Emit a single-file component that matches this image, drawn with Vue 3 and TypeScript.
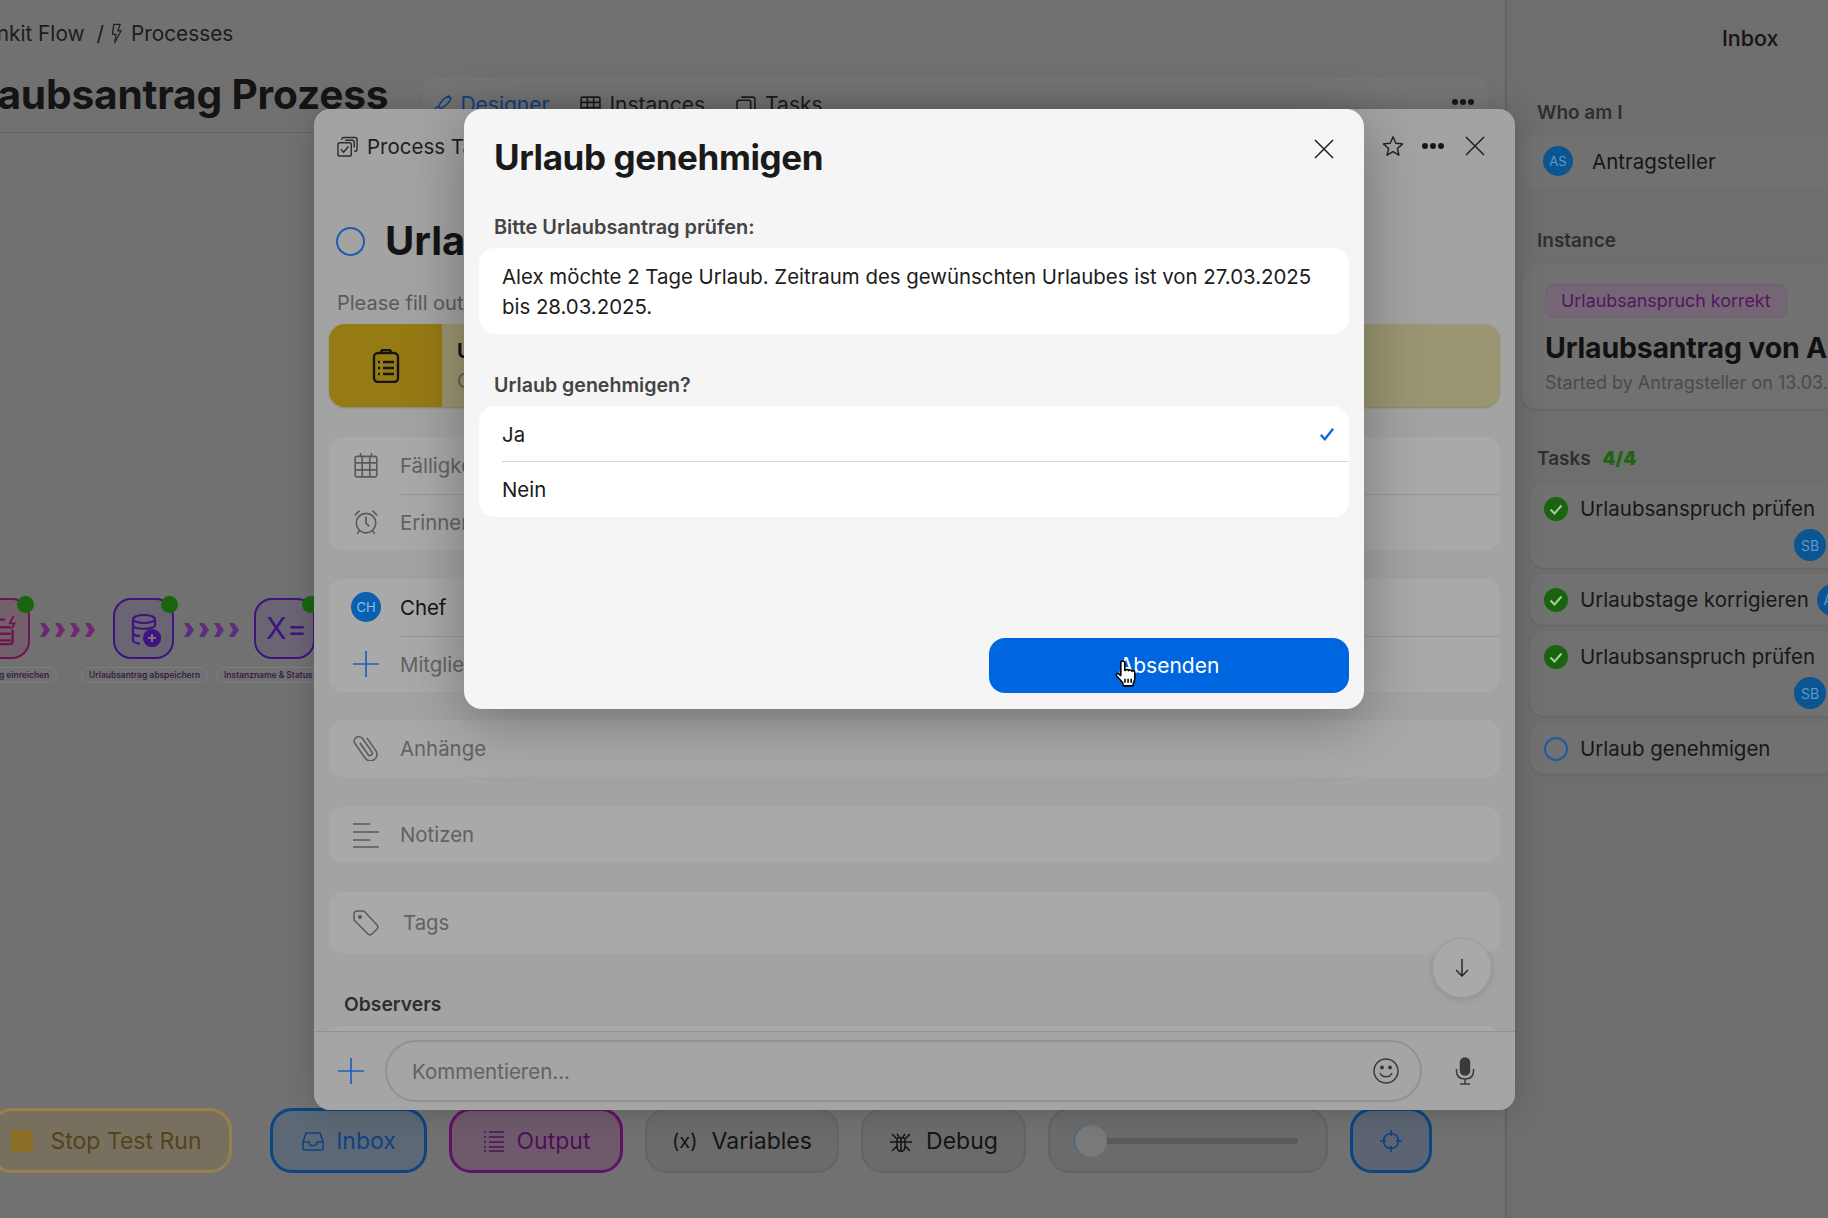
<script setup lang="ts">
interface ToolButton {
  label: string;
  kind: string;
}

interface TaskItem {
  name: string;
  done: boolean;
  owner?: string;
  ownerInline?: boolean;
}

const toolButtons: ToolButton[] = [
  { label: "Stop Test Run", kind: "stop" },
  { label: "Inbox", kind: "inbox" },
  { label: "Output", kind: "output" },
  { label: "Variables", kind: "variables" },
  { label: "Debug", kind: "debug" },
];

const tasks: TaskItem[] = [
  { name: "Urlaubsanspruch prüfen", done: true, owner: "SB" },
  { name: "Urlaubstage korrigieren", done: true, owner: "AS", ownerInline: true },
  { name: "Urlaubsanspruch prüfen", done: true, owner: "SB" },
  { name: "Urlaub genehmigen", done: false },
];

const nodes = [
  { cls: "node-red", left: -31 },
  { cls: "node-purple", left: 113 },
  { cls: "node-purple", left: 254 },
];
const chevrons = [40, 184];
const nodeLabels = [
  { text: "Urlaubsantrag einreichen", left: -62 },
  { text: "Urlaubsantrag abspeichern", left: 81 },
  { text: "Instanzname & Status", left: 216 },
];
</script>

<template>
  <div class="screen">
    <main class="main">
      <div class="crumbs">
        <span>Blinkit Flow</span>
        <span class="slash">/</span>
        <svg class="bolt" viewBox="0 0 12 22" fill="none" stroke="#222" stroke-width="1.4" stroke-linejoin="round">
          <path d="M3 1h7L7.5 8H11L4 21l1.5-9H1.5z" />
        </svg>
        <span>Processes</span>
      </div>
      <div class="title-row">
        <h1>Urlaubsantrag Prozess</h1>
        <div class="tabs">
          <span class="tab tab-active">
            <svg viewBox="0 0 20 20" fill="none" stroke="currentColor" stroke-width="1.5"><path d="M17 2c-5 2-8 6-10 10l2 2c4-2 8-5 10-10zM7 12c-3 0-3 3-5 5 3 1 7 0 7-3" /></svg>
            Designer
          </span>
          <span class="tab">
            <svg viewBox="0 0 20 20" fill="none" stroke="currentColor" stroke-width="1.5"><rect x="1" y="3" width="18" height="14" rx="1.5" /><path d="M1 8h18M1 13h18M7 3v14M13 3v14" /></svg>
            Instances
          </span>
          <span class="tab">
            <svg viewBox="0 0 20 20" fill="none" stroke="currentColor" stroke-width="1.5"><rect x="1" y="6" width="13" height="13" rx="2" /><path d="M5 3h11a2 2 0 0 1 2 2v10" /></svg>
            Tasks
          </span>
          <span class="tab-dots"><i></i><i></i><i></i></span>
        </div>
      </div>

      <div class="canvas">
        <div
          v-for="n in nodes"
          :key="n.left"
          class="node"
          :class="n.cls"
          :style="{ left: n.left + 'px' }"
        >
          <span class="node-dot"></span>
        </div>
        <svg class="node-icon node-icon-form" viewBox="0 0 34 34" fill="none" stroke="#6e1450" stroke-width="2.6">
          <path d="M2 6h14M2 14h20M2 21h20M2 28h20M24 17v12a3 3 0 0 1-3 3H2" />
          <path d="M25 2l-4 8h5l-3 6" stroke-width="2" />
        </svg>
        <svg class="node-icon node-icon-db" viewBox="0 0 32 34" fill="none" stroke="#3e1480" stroke-width="2.2">
          <ellipse cx="15" cy="6" rx="11" ry="4" />
          <path d="M4 6v22c0 1 3 2 7 3M26 6v8M4 13c2 3 14 4 21 1M4 21c1 1 4 2 7 2" />
          <circle cx="23" cy="25" r="8" fill="#3e1480" />
          <path d="M23 21v8M19 25h8" stroke="#7d6e88" />
        </svg>
        <span class="node-eq">X=</span>
        <div v-for="c in chevrons" :key="c" class="chevrons" :style="{ left: c + 'px' }">
          <svg v-for="i in 4" :key="i" viewBox="0 0 10 14" :fill="c === 40 ? '#6d2a72' : '#5f2c80'">
            <path d="M0 0h5l5 7-5 7H0l4-7z" />
          </svg>
        </div>
        <span
          v-for="l in nodeLabels"
          :key="l.text"
          class="node-label"
          :style="{ left: l.left + 'px' }"
        >{{ l.text }}</span>

        <div class="toolbar">
          <button v-for="b in toolButtons" :key="b.kind" class="tool" :class="'tool-' + b.kind">
            <span v-if="b.kind === 'stop'" class="stop-square"></span>
            <svg v-else-if="b.kind === 'inbox'" viewBox="0 0 24 24" fill="none" stroke="currentColor" stroke-width="1.6">
              <path d="M2 13l3-9h14l3 9v6a2 2 0 0 1-2 2H4a2 2 0 0 1-2-2zM2 13h6c0 5 8 5 8 0h6" />
            </svg>
            <svg v-else-if="b.kind === 'output'" viewBox="0 0 24 24" fill="none" stroke="currentColor" stroke-width="1.6">
              <path d="M7 3h15M7 8h15M7 13h15M7 18h15M7 22h15M2 3h2M2 8h2M2 13h2M2 18h2M2 22h2" />
            </svg>
            <span v-else-if="b.kind === 'variables'" class="var-sign">(x)</span>
            <svg v-else viewBox="0 0 24 24" fill="none" stroke="currentColor" stroke-width="1.5">
              <path d="M8 5l2 3M16 5l-2 3M1 13h22M3 5l5 5M21 5l-5 5M3 22l5-5M21 22l-5-5M12 9v13M8 10c2-2 6-2 8 0v7c0 7-8 7-8 0z" />
            </svg>
            {{ b.label }}
          </button>
          <div class="slider-box">
            <span class="slider-track"></span>
            <span class="slider-thumb"></span>
          </div>
          <button class="tool tool-target">
            <svg viewBox="0 0 24 24" fill="none" stroke="currentColor" stroke-width="1.7">
              <circle cx="12" cy="12" r="7.5" />
              <path d="M12 1v6M12 17v6M1 12h6M17 12h6" />
            </svg>
          </button>
        </div>
      </div>
    </main>

    <aside class="panel">
      <div class="panel-head">Inbox</div>
      <div class="panel-label who">Who am I</div>
      <div class="panel-card who-card">
        <span class="avatar">AS</span>
        <span>Antragsteller</span>
      </div>
      <div class="panel-label instance">Instance</div>
      <div class="panel-card instance-card">
        <span class="chip">Urlaubsanspruch korrekt</span>
        <div class="instance-title">Urlaubsantrag von Alex</div>
        <div class="instance-sub">Started by Antragsteller on 13.03.2025</div>
      </div>
      <div class="panel-label tasks-label">Tasks <b>4/4</b></div>
      <div class="task-list">
        <div v-for="(t, i) in tasks" :key="i" class="task">
          <div class="task-row">
            <svg v-if="t.done" class="task-icon" viewBox="0 0 24 24">
              <circle cx="12" cy="12" r="12" fill="#1a6410" />
              <path d="M6.5 12.5l4 4 7-8" fill="none" stroke="#a8c9a2" stroke-width="2" />
            </svg>
            <span v-else class="task-open"></span>
            <span>{{ t.name }}</span>
            <span v-if="t.ownerInline" class="avatar avatar-lg">{{ t.owner }}</span>
          </div>
          <div v-if="t.owner && !t.ownerInline" class="task-owner">
            <span class="avatar avatar-lg">{{ t.owner }}</span>
          </div>
        </div>
      </div>
    </aside>

    <section class="sheet">
      <header class="sheet-head">
        <svg class="head-icon" viewBox="0 0 22 22" fill="none" stroke="#2c2c2c" stroke-width="1.5">
          <rect x="1" y="7" width="14" height="14" rx="2" />
          <path d="M5 4V3.500a2 2 0 0 1 2-2h12a2 2 0 0 1 2 2V14a2 2 0 0 1-2 2h-1M4 14l3 3 5-6" />
          <path d="M8.500 4.500H16a2 2 0 0 1 2 2V12" />
        </svg>
        <span>Process Task</span>
        <div class="head-actions">
          <svg class="star" viewBox="0 0 24 24" fill="none" stroke="#1f1f1f" stroke-width="1.5" stroke-linejoin="round">
            <path d="M12 2l3 7 7.500.7-5.700 5 1.700 7.300-6.500-3.900L5.500 22l1.700-7.300-5.700-5L9 9z" />
          </svg>
          <span class="dots"><i></i><i></i><i></i></span>
          <svg class="close" viewBox="0 0 20 20" stroke="#1f1f1f" stroke-width="1.500">
            <path d="M1 1l18 18M19 1L1 19" />
          </svg>
        </div>
      </header>

      <div class="sheet-body">
        <div class="sheet-title">
          <span class="open-ring"></span>
          <h2>Urlaub genehmigen</h2>
        </div>
        <p class="sheet-desc">Please fill out the form below</p>
        <div class="form-card">
          <div class="form-thumb">
            <svg viewBox="0 0 28 34" fill="none" stroke="#151515" stroke-width="2.4">
              <rect x="2" y="4" width="24" height="29" rx="4" />
              <path d="M9 4c0-2 1-3 2-3h6c1 0 2 1 2 3M11 13h11M11 19h11M11 25h11M6 13h2M6 19h2M6 25h2" />
            </svg>
          </div>
          <div class="form-text">
            <b>Urlaub genehmigen</b>
            <span>Complete form</span>
          </div>
        </div>

        <div class="group group-dates">
          <div class="row">
            <svg class="row-icon" viewBox="0 0 24 24" fill="none" stroke="#5a5a5a" stroke-width="1.500">
              <rect x="2" y="4" width="20" height="19" rx="2" />
              <path d="M2 10h20M2 16.500h20M8.500 4v19M15.500 4v19M7 1v3M17 1v3" />
            </svg>
            <span class="row-text">Fälligkeitsdatum</span>
          </div>
          <div class="row">
            <svg class="row-icon" viewBox="0 0 24 24" fill="none" stroke="#5a5a5a" stroke-width="1.500">
              <circle cx="12" cy="13" r="9" />
              <path d="M12 7v6l3 3M1.500 6L6 1.500M22.500 6L18 1.500M6 20l-2 3M18 20l2 3" />
            </svg>
            <span class="row-text">Erinnerung</span>
          </div>
        </div>

        <div class="group group-people">
          <div class="row">
            <span class="avatar avatar-chef">CH</span>
            <span class="row-text dark">Chef</span>
          </div>
          <div class="row">
            <svg class="row-icon" viewBox="0 0 26 26" stroke="#2060b5" stroke-width="1.700">
              <path d="M13 0v26M0 13h26" />
            </svg>
            <span class="row-text">Mitglieder</span>
          </div>
        </div>

        <div class="group group-files">
          <div class="row">
            <svg class="row-icon" viewBox="3 3 20 20" fill="none" stroke="#5a5a5a" stroke-width="1.200">
              <path transform="rotate(-35 13 13)" d="M18 7v12a5 5 0 0 1-10 0V5.500a3.500 3.500 0 0 1 7 0V18a1.800 1.800 0 0 1-3.600 0V7" />
            </svg>
            <span class="row-text">Anhänge</span>
          </div>
        </div>

        <div class="group group-notes">
          <div class="row">
            <svg class="row-icon" viewBox="0 0 26 26" stroke="#5a5a5a" stroke-width="1.500">
              <path d="M0 2h17M0 10h26M0 18h17M0 25h26" />
            </svg>
            <span class="row-text">Notizen</span>
          </div>
        </div>

        <div class="group group-tags">
          <div class="row">
            <svg class="row-icon" viewBox="0 0 26 26" fill="none" stroke="#5a5a5a" stroke-width="1.500">
              <path d="M1 4a3 3 0 0 1 3-3h6a3 3 0 0 1 2 1l12 13a3 3 0 0 1 0 4l-5 5a3 3 0 0 1-4 0L2 11a3 3 0 0 1-1-2z" />
              <circle cx="7" cy="7" r="1.300" fill="#5a5a5a" />
            </svg>
            <span class="row-text tags-text">Tags</span>
          </div>
        </div>

        <div class="observers">Observers</div>
        <div class="group observers-card"></div>
      </div>

      <footer class="sheet-foot">
        <svg class="foot-plus" viewBox="0 0 26 26" stroke="#2060b5" stroke-width="1.700">
          <path d="M13 0v26M0 13h26" />
        </svg>
        <div class="comment">
          <span>Kommentieren...</span>
          <svg viewBox="0 0 26 26" fill="none" stroke="#3a3a3a" stroke-width="1.500">
            <circle cx="13" cy="13" r="12" />
            <path d="M7 15c2 5 10 5 12 0" />
            <circle cx="9" cy="9.500" r="1.200" fill="#3a3a3a" />
            <circle cx="17" cy="9.500" r="1.200" fill="#3a3a3a" />
          </svg>
        </div>
        <svg class="mic" viewBox="0 0 20 28" fill="none" stroke="#3a3a3a" stroke-width="1.500">
          <rect x="5.500" y="1" width="9" height="17" rx="4.500" fill="#3a3a3a" />
          <path d="M1.500 12v2c0 5 3 8 8.500 8s8.500-3 8.500-8v-2M10 22v5M5 27h10" />
        </svg>
      </footer>

      <button class="scroll-down" aria-label="Nach unten">
        <svg viewBox="0 0 16 20" fill="none" stroke="#222" stroke-width="1.400">
          <path d="M8 1v17M2 12l6 6 6-6" />
        </svg>
      </button>
    </section>

    <section class="modal">
      <header class="modal-head">
        <h2>Urlaub genehmigen</h2>
        <svg viewBox="0 0 20 20" stroke="#1f1f1f" stroke-width="1.500">
          <path d="M1 1l18 18M19 1L1 19" />
        </svg>
      </header>

      <div class="modal-label first">Bitte Urlaubsantrag prüfen:</div>
      <div class="modal-card message">
        Alex möchte 2 Tage Urlaub. Zeitraum des gewünschten Urlaubes ist von 27.03.2025 bis 28.03.2025.
      </div>

      <div class="modal-label second">Urlaub genehmigen?</div>
      <div class="modal-card options">
        <div class="option option-selected">
          <span>Ja</span>
          <svg viewBox="0 0 18 16" fill="none" stroke="#0a66dc" stroke-width="2.600">
            <path d="M2 9l4.500 5L16 2" />
          </svg>
        </div>
        <div class="option">Nein</div>
      </div>

      <div class="modal-foot">
        <button class="submit">Absenden</button>
      </div>

      <svg class="pointer" viewBox="0 0 24 28" stroke="#000" stroke-width="1.500" stroke-linejoin="round">
        <path fill="#fff" d="M7 3c0-1.200.8-2 1.900-2s1.900.8 1.900 2v7l.6 0c.3-1 2.900-1 3.200.3.500-1 2.800-.9 3.100.5.6-.8 2.800-.5 2.800 1.200v5.500c0 2-.6 3-1.300 4.500l-.5 3H9.500l-.8-3.200L3 15.500c-1-1.400.3-3 1.800-2.200L7 15z" />
        <path fill="none" d="M11 18v4M14 18v4M17 18v4" />
      </svg>
    </section>
  </div>
</template>

<style>
html,
body {
  margin: 0;
  background: #707070;
}
</style>

<style scoped>
.screen {
  position: relative;
  display: flex;
  width: 1828px;
  height: 1218px;
  overflow: hidden;
  background: #717171;
  color: #141414;
  font-family: Inter, "Liberation Sans", sans-serif;
}

h1,
h2,
p {
  margin: 0;
}

.main {
  display: flex;
  flex-direction: column;
  width: 1505px;
  flex-shrink: 0;
}

.crumbs {
  display: flex;
  align-items: center;
  gap: 9px;
  height: 66px;
  margin-left: -27px;
  font-size: 20.800px;
  color: #1c1c1c;
}

.slash {
  margin-left: 3px;
}

.bolt {
  width: 11px;
  height: 21px;
  margin-left: -2px;
}

.title-row {
  display: flex;
  height: 66px;
  border-bottom: 1px solid #656565;
}

h1 {
  margin-left: -60px;
  font-size: 40.700px;
  font-weight: 700;
  line-height: 58px;
  white-space: nowrap;
  letter-spacing: -0.2px;
}

.tabs {
  display: flex;
  align-items: center;
  flex: 1;
  gap: 31px;
  height: 48px;
  margin: 12px 18px 0 35px;
  padding: 4px 8px 0;
  box-sizing: border-box;
  background: #757575;
  border-radius: 10px;
  font-size: 21px;
}

.tab {
  display: flex;
  align-items: center;
  gap: 8px;
  color: #1c1c1c;
}

.tab svg {
  width: 21px;
  height: 21px;
}

.tab-active {
  color: #104280;
}

.tab-dots,
.dots {
  display: flex;
  gap: 2px;
}

.tab-dots {
  margin-left: auto;
  margin-right: 5px;
  margin-bottom: 4px;
}

.tab-dots i,
.dots i {
  width: 6px;
  height: 6px;
  border-radius: 50%;
  background: #161616;
}

.canvas {
  position: relative;
  flex: 1;
}

.node {
  position: absolute;
  top: 465px;
  width: 57px;
  height: 57px;
  border: 2.5px solid;
  border-radius: 18px;
}

.node-red {
  border-color: #6e1450;
  background: #72606a;
}

.node-purple {
  border-color: #3e1480;
  background: #6a6473;
}

.node-dot {
  position: absolute;
  top: -4px;
  right: -6px;
  width: 17px;
  height: 17px;
  border-radius: 50%;
  background: #1a6410;
}

.node-icon {
  position: absolute;
  top: 480px;
  width: 32px;
  height: 34px;
}

.node-icon-form {
  left: -10px;
}

.node-icon-db {
  left: 129px;
}

.node-eq {
  position: absolute;
  top: 476px;
  left: 266px;
  font-size: 30px;
  letter-spacing: 2px;
  line-height: 38px;
  color: #3e1480;
}

.chevrons {
  position: absolute;
  top: 490px;
  display: flex;
  gap: 5px;
}

.chevrons svg {
  width: 10px;
  height: 14px;
}

.node-label {
  position: absolute;
  top: 534px;
  padding: 0 7px;
  border: 1px solid #7e7e7e;
  border-radius: 8px;
  font-size: 8.450px;
  font-weight: 600;
  line-height: 14px;
  white-space: nowrap;
  color: #352048;
}

.toolbar {
  position: absolute;
  left: -10px;
  bottom: 45px;
  display: flex;
  gap: 22px;
}

.tool {
  display: flex;
  align-items: center;
  justify-content: center;
  gap: 11px;
  height: 65px;
  box-sizing: border-box;
  border: 2px solid #646464;
  border-radius: 22px;
  background: #6b6b6b;
  color: #141414;
  font-family: inherit;
  font-size: 23px;
  white-space: nowrap;
}

.tool svg {
  width: 24px;
  height: 24px;
}

.tool-stop {
  width: 242px;
  margin-right: 16px;
  padding: 0 10px 0 0;
  gap: 18px;
  border: 3px solid #98804a;
  background: #78705f;
  color: #54431a;
}

.stop-square {
  width: 22px;
  height: 22px;
  background: #8c6e26;
}

.tool-inbox {
  width: 157px;
  border: 3px solid #0a4682;
  background: #5c6875;
  color: #104280;
}

.tool-output {
  width: 174px;
  border: 3px solid #651068;
  background: #6d5a6a;
  color: #4e1058;
}

.tool-variables {
  width: 194px;
}

.tool-debug {
  width: 165px;
  gap: 13px;
}

.var-sign {
  font-size: 20px;
  margin-right: 3px;
}

.slider-box {
  position: relative;
  width: 280px;
  height: 65px;
  box-sizing: border-box;
  border: 2px solid #646464;
  border-radius: 22px;
  background: #6b6b6b;
}

.slider-track {
  position: absolute;
  top: 28px;
  left: 42px;
  width: 206px;
  height: 6px;
  border-radius: 3px;
  background: #595959;
}

.slider-thumb {
  position: absolute;
  top: 15px;
  left: 25px;
  width: 32px;
  height: 32px;
  border-radius: 50%;
  background: #797979;
  box-shadow: -1px 0 0 #34609a;
}

.tool-target {
  width: 82px;
  border: 3px solid #0a4682;
  background: #5c6474;
  color: #104280;
}

.panel {
  flex: 1;
  box-sizing: border-box;
  padding-left: 15px;
  overflow: hidden;
  border-left: 2px solid #636363;
  background: #6e6e6e;
}

.panel-head {
  height: 76px;
  padding-left: 200px;
  font-size: 21.500px;
  font-weight: 500;
  line-height: 76px;
  color: #141414;
}

.panel-label {
  padding-left: 15px;
  font-size: 19px;
  font-weight: 600;
  line-height: 24px;
  color: #2e2e2e;
}

.panel-label b {
  margin-left: 7px;
  font-size: 18.500px;
  color: #206310;
}

.who {
  margin-top: 25px;
}

.instance {
  margin-top: 42px;
}

.tasks-label {
  margin-top: 37px;
}

.panel-card {
  width: 340px;
  background: #717171;
  border-radius: 14px;
}

.who-card {
  display: flex;
  align-items: center;
  gap: 19px;
  height: 52px;
  margin-top: 10px;
  padding-left: 21px;
  box-sizing: border-box;
  font-size: 20.500px;
  color: #161616;
}

.instance-card {
  height: 145px;
  margin-top: 11px;
  padding: 20px 0 0 23px;
  box-sizing: border-box;
  box-shadow: 0 1px 2px #626262;
  white-space: nowrap;
}

.chip {
  display: inline-block;
  height: 34px;
  padding: 0 15px;
  border: 1px solid #6f606f;
  border-radius: 8px;
  box-sizing: border-box;
  background: #756675;
  font-size: 17.900px;
  line-height: 32px;
  color: #551463;
}

.instance-title {
  margin-top: 10px;
  font-size: 28.500px;
  font-weight: 700;
  letter-spacing: -0.2px;
  line-height: 40px;
  color: #111;
}

.instance-sub {
  margin-top: 3px;
  font-size: 18px;
  line-height: 24px;
  color: #4a4a4a;
}

.avatar {
  display: flex;
  align-items: center;
  justify-content: center;
  flex-shrink: 0;
  width: 30px;
  height: 30px;
  border-radius: 50%;
  background: #0a5592;
  font-size: 13px;
  color: #5f98c6;
}

.avatar-lg {
  width: 32px;
  height: 32px;
  font-size: 14px;
}

.avatar-chef {
  margin: 0 -2px;
  background: #0a60b0;
  color: #8fbde4;
}

.task-list {
  display: flex;
  flex-direction: column;
  gap: 6px;
  margin: 12px 0 0 8px;
}

.task {
  width: 320px;
  box-sizing: border-box;
  padding: 0 24px 0 14px;
  border-radius: 14px;
  background: #717171;
  box-shadow: 0 1px 2px #626262;
  font-size: 20.500px;
  color: #181818;
  white-space: nowrap;
}

.task:last-child {
  margin-top: 1px;
}

.task-row {
  display: flex;
  align-items: center;
  gap: 12px;
  height: 51px;
}

.task-row .avatar {
  margin-left: -4px;
}

.task-icon {
  width: 24px;
  height: 24px;
  flex-shrink: 0;
}

.task-open {
  width: 20px;
  height: 20px;
  border: 2px solid #1c5aa8;
  border-radius: 50%;
  flex-shrink: 0;
}

.task-owner {
  display: flex;
  justify-content: flex-end;
  height: 39px;
  margin-top: -5px;
}

.sheet {
  position: absolute;
  top: 109px;
  left: 314px;
  display: flex;
  flex-direction: column;
  width: 1201px;
  height: 1001px;
  border-radius: 16px;
  background: #a3a3a3;
  box-shadow: 0 0 30px rgba(0, 0, 0, 0.18);
  overflow: hidden;
}

.sheet-head {
  display: flex;
  align-items: center;
  flex-shrink: 0;
  gap: 9px;
  height: 74px;
  padding: 0 30px 0 23px;
  font-size: 20.500px;
  color: #1e1e1e;
}

.head-icon {
  width: 21px;
  height: 21px;
}

.head-actions {
  display: flex;
  align-items: center;
  margin-left: auto;
}

.star {
  width: 22px;
  height: 22px;
  margin-right: 18px;
}

.close {
  width: 20px;
  height: 20px;
  margin-left: 21px;
}

.sheet-body {
  flex: 1;
  padding: 0 15px;
  overflow: hidden;
}

.sheet-title {
  display: flex;
  align-items: center;
  gap: 20px;
  height: 56px;
  margin: 30px 0 0 7px;
}

.open-ring {
  width: 25px;
  height: 25px;
  border: 2px solid #1f5cae;
  border-radius: 50%;
}

.sheet-title h2 {
  font-size: 40px;
  font-weight: 700;
  line-height: 56px;
}

.sheet-desc {
  margin: 20px 0 0 8px;
  font-size: 20px;
  line-height: 28px;
  color: #5a5a5a;
}

.form-card {
  display: flex;
  height: 83px;
  margin-top: 7px;
  overflow: hidden;
  border-radius: 16px;
  background: #9a9672;
  box-shadow: 0 1px 2px #86866a;
}

.form-thumb {
  display: flex;
  align-items: center;
  justify-content: center;
  width: 113px;
  background: #967a14;
}

.form-thumb svg {
  width: 28px;
  height: 34px;
}

.form-text {
  display: flex;
  flex-direction: column;
  gap: 6px;
  margin: 15px 0 0 15px;
  font-size: 20px;
}

.form-text span {
  color: #626262;
}

.group {
  border-radius: 14px;
  background: #a9a9a9;
}

.group-dates {
  margin-top: 30px;
}

.group-people {
  margin-top: 29px;
}

.group-files {
  margin-top: 28px;
}

.group-notes {
  margin-top: 30px;
}

.group-tags {
  margin-top: 29px;
}

.group-tags .row {
  height: 61px;
}

.row {
  position: relative;
  display: flex;
  align-items: center;
  gap: 21px;
  height: 56.5px;
  padding-left: 24px;
  box-sizing: border-box;
}

.row + .row {
  border-top: 1px solid transparent;
}

.row + .row::before {
  content: "";
  position: absolute;
  top: -1px;
  left: 71px;
  right: 0;
  height: 1px;
  background: #979797;
}

.row-icon {
  flex-shrink: 0;
  width: 26px;
  height: 26px;
}

.row-text {
  font-size: 20.400px;
  color: #626262;
}

.row-text.dark {
  color: #141414;
}

.tags-text {
  margin-left: 3px;
}

.observers {
  margin: 39px 0 0 15px;
  font-size: 19.300px;
  font-weight: 600;
  line-height: 24px;
  color: #2e2e2e;
}

.observers-card {
  height: 60px;
  margin-top: 10px;
}

.sheet-foot {
  display: flex;
  align-items: center;
  flex-shrink: 0;
  height: 79px;
  box-sizing: border-box;
  padding: 0 0 0 24px;
  border-top: 1px solid #929292;
  background: #a5a5a5;
}

.foot-plus {
  width: 26px;
  height: 26px;
  flex-shrink: 0;
}

.comment {
  display: flex;
  align-items: center;
  justify-content: space-between;
  width: 1037px;
  height: 62px;
  margin-left: 21px;
  padding: 0 21px 0 25px;
  box-sizing: border-box;
  border: 2px solid #929292;
  border-radius: 31px;
  font-size: 20.500px;
  color: #626262;
}

.comment svg {
  width: 26px;
  height: 26px;
}

.mic {
  width: 20px;
  height: 28px;
  margin-left: 33px;
}

.scroll-down {
  position: absolute;
  top: 829px;
  left: 1118px;
  display: flex;
  align-items: center;
  justify-content: center;
  width: 60px;
  height: 60px;
  padding: 0;
  border: 1px solid #9c9c9c;
  border-radius: 50%;
  background: #a9a9a9;
  box-shadow: 0 2px 6px rgba(0, 0, 0, 0.12);
}

.scroll-down svg {
  width: 16px;
  height: 20px;
}

.modal {
  position: absolute;
  top: 109px;
  left: 464px;
  display: flex;
  flex-direction: column;
  width: 900px;
  height: 600px;
  padding: 0 15px 16px;
  box-sizing: border-box;
  border-radius: 18px;
  background: #f5f5f5;
  box-shadow: 0 12px 60px rgba(0, 0, 0, 0.3);
}

.modal-head {
  display: flex;
  align-items: center;
  justify-content: space-between;
  height: 96px;
  padding: 0 15px;
}

.modal-head h2 {
  font-size: 35px;
  font-weight: 700;
  color: #1a1a1a;
  letter-spacing: -0.4px;
}

.modal-head svg {
  width: 20px;
  height: 20px;
  margin-top: -16px;
}

.modal-label {
  padding-left: 15px;
  font-weight: 600;
  line-height: 24px;
  color: #444;
}

.first {
  margin-top: 10px;
  font-size: 19.900px;
}

.second {
  margin-top: 39px;
  font-size: 19.600px;
}

.modal-card {
  margin-top: 9px;
  border-radius: 16px;
  background: #fff;
  font-size: 20.400px;
  color: #1c1c1c;
}

.message {
  height: 86px;
  padding: 14px 30px 0 23px;
  box-sizing: border-box;
  line-height: 30px;
}

.option {
  display: flex;
  align-items: center;
  justify-content: space-between;
  height: 55.5px;
  margin-left: 23px;
  padding-right: 14px;
}

.option-selected {
  padding-top: 2px;
  box-sizing: border-box;
  border-bottom: 1px solid #d6d6d6;
}

.option svg {
  width: 16px;
  height: 14px;
}

.modal-foot {
  display: flex;
  justify-content: flex-end;
  margin-top: auto;
}

.submit {
  width: 360px;
  height: 55px;
  border: 0;
  border-radius: 16px;
  background: #0066e0;
  color: #fff;
  font-family: inherit;
  font-size: 21px;
}

.pointer {
  position: absolute;
  top: 551px;
  left: 649px;
  width: 26px;
  height: 29px;
}
</style>
